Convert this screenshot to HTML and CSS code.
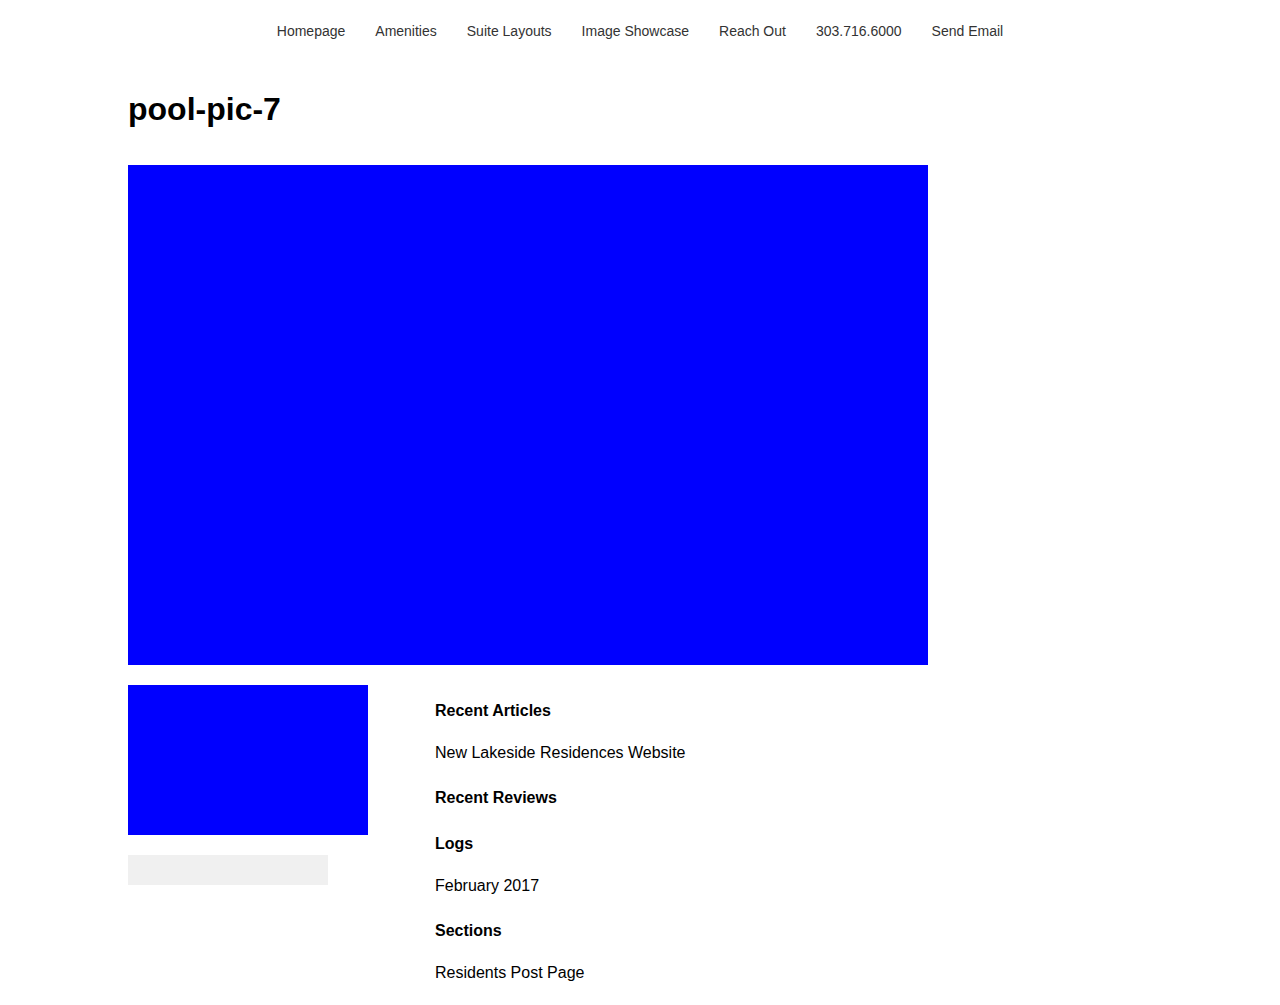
FILE: index.html
```html
<!DOCTYPE html>
<html lang="en">
<head>
<meta charset="utf-8">
<title>pool-pic-7</title>
<link rel="stylesheet" href="styles.css">
</head>
<body>
<header class="site-header">
  <nav class="main-nav">
    <a href="#">Homepage</a>
    <a href="#">Amenities</a>
    <a href="#">Suite Layouts</a>
    <a href="#">Image Showcase</a>
    <a href="#">Reach Out</a>
    <a href="#">303.716.6000</a>
    <a href="#">Send Email</a>
  </nav>
</header>
<main class="container">
  <h1 class="page-title">pool-pic-7</h1>
  <div class="hero-image"></div>
  <div class="lower">
    <div class="left-col">
      <div class="thumb"></div>
      <div class="search-box"></div>
    </div>
    <aside class="sidebar">
      <section class="widget">
        <h3>Recent Articles</h3>
        <ul><li><a href="#">New Lakeside Residences Website</a></li></ul>
      </section>
      <section class="widget widget-empty">
        <h3>Recent Reviews</h3>
      </section>
      <section class="widget">
        <h3>Logs</h3>
        <ul><li><a href="#">February 2017</a></li></ul>
      </section>
      <section class="widget">
        <h3>Sections</h3>
        <ul><li><a href="#">Residents Post Page</a></li></ul>
      </section>
    </aside>
  </div>
</main>
</body>
</html>
```

FILE: styles.css
```css
html, body {
  margin: 0;
  padding: 0;
  background: #ffffff;
}
body {
  font-family: "Liberation Sans", Arial, sans-serif;
  color: #000;
}
a {
  color: inherit;
  text-decoration: none;
}
.site-header {
  padding: 21px 0;
}
.main-nav {
  display: flex;
  justify-content: center;
  gap: 30px;
  font-size: 14px;
  line-height: 20px;
}
.main-nav a {
  color: #333333;
}
.container {
  width: 1024px;
  margin: 0 auto;
  padding-top: 29px;
}
.page-title {
  margin: 0 0 37px;
  font-size: 32px;
  line-height: 37px;
  font-weight: bold;
}
.hero-image {
  width: 800px;
  height: 500px;
  background: #0000ff;
}
.lower {
  display: flex;
  gap: 67px;
  margin-top: 20px;
}
.left-col {
  width: 240px;
  display: flex;
  flex-direction: column;
  gap: 20px;
}
.thumb {
  width: 240px;
  height: 150px;
  background: #0000ff;
}
.search-box {
  width: 200px;
  height: 30px;
  background: #f0f0f0;
}
.sidebar {
  padding-top: 17px;
  font-size: 16px;
  line-height: 18px;
}
.widget {
  margin-bottom: 27px;
}
.widget-empty {
  margin-bottom: 28px;
}
.widget h3 {
  margin: 0;
  font-size: 16px;
  line-height: 18px;
  font-weight: bold;
}
.widget ul {
  list-style: none;
  margin: 24px 0 0;
  padding: 0;
}
```
